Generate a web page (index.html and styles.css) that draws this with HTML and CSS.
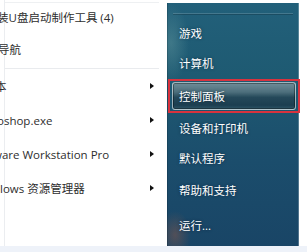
FILE: index.html
```html
<!DOCTYPE html>
<html lang="zh-CN">
<head>
<meta charset="utf-8">
<title>开始菜单</title>
<link rel="stylesheet" href="styles.css">
</head>
<body>
<div class="menu">
  <div class="left">
    <div class="litem first"><span class="label cut3">装U盘启动制作工具 (4)</span></div>
    <div class="litem second"><span class="label cut2">导航</span></div>
    <div class="lsep"></div>
    <div class="litem"><span class="label cut5">本</span><span class="arrow"></span></div>
    <div class="litem"><span class="label cut3">oshop.exe</span><span class="arrow"></span></div>
    <div class="litem"><span class="label cut7">ware Workstation Pro</span><span class="arrow"></span></div>
    <div class="litem"><span class="label">lows 资源管理器</span><span class="arrow"></span></div>
  </div>
  <div class="right">
    <div class="rsep"></div>
    <div class="ritem">游戏</div>
    <div class="ritem">计算机</div>
    <div class="ritem hl g4"><span class="btn">控制面板</span><span class="redbox"></span></div>
    <div class="ritem g3">设备和打印机</div>
    <div class="ritem">默认程序</div>
    <div class="ritem g2">帮助和支持</div>
    <div class="ritem g5">运行...</div>
  </div>
</div>
<div class="bottom"></div>
</body>
</html>
```
FILE: styles.css
```css
html, body {
  margin: 0;
  padding: 0;
  background: #ffffff;
  width: 307px;
  height: 252px;
  overflow: hidden;
  font-family: "Open Sans", "Noto Sans CJK SC", sans-serif;
  font-size: 11.5px;
}

.menu {
  display: flex;
  height: 246px;
}

.left {
  width: 167px;
  flex: none;
  overflow: hidden;
  background:
    linear-gradient(to right, transparent 4px, #ebedf0 4px, #ebedf0 5px, transparent 5px),
    #ffffff;
  position: relative;
}

.left::before {
  content: "";
  display: block;
  height: 1px;
  margin: 2px 8px 0 5px;
  background: #eef0f2;
}

.litem {
  height: 34px;
  display: flex;
  align-items: center;
  justify-content: space-between;
  padding-right: 13px;
  color: #2e2e2e;
}

.litem.first {
  height: 27px;
}

.litem.second {
  height: 38px;
}

.lsep {
  height: 1px;
  margin: 0 8px 0 5px;
  background: #e9ebee;
}

.label {
  white-space: nowrap;
}

.cut2 { margin-left: -2px; }
.cut3 { margin-left: -3px; }
.cut5 { margin-left: -5px; }
.cut7 { margin-left: -7px; }

.arrow {
  width: 0;
  height: 0;
  border-top: 3px solid transparent;
  border-bottom: 3px solid transparent;
  border-left: 4px solid #111;
  flex: none;
}

.right {
  width: 132px;
  flex: none;
  margin-top: 3px;
  height: 243px;
  box-sizing: border-box;
  padding-top: 10px;
  background:
    radial-gradient(ellipse 18px 40px at 4px 40px, rgba(120, 170, 170, 0.35), transparent),
    radial-gradient(ellipse 16px 24px at 8px 232px, rgba(150, 90, 70, 0.45), transparent),
    linear-gradient(to bottom, #22607a 0%, #1e5a72 30%, #1b4d6c 65%, #194566 100%);
  box-shadow: inset -1px 0 0 rgba(255,255,255,0.25), inset 1px 0 0 rgba(0,0,0,0.15);
}

.rsep {
  height: 1px;
  margin: 0 6px 4px 6px;
  background: rgba(255, 255, 255, 0.16);
  box-shadow: 0 1px 0 rgba(0, 0, 0, 0.18);
}

.ritem {
  height: 30px;
  display: flex;
  align-items: center;
  padding-left: 12px;
  color: #ffffff;
  text-shadow: 0 0 3px rgba(0, 20, 40, 0.6);
  position: relative;
}

.g2 { margin-top: 2px; }
.g3 { margin-top: 3px; }
.g4 { margin-top: 4px; }
.g5 { margin-top: 5px; }

.ritem.hl {
  height: 28px;
  padding: 0 3px 0 5px;
  margin-bottom: 2px;
}

.btn {
  flex: 1;
  height: 28px;
  box-sizing: border-box;
  display: flex;
  align-items: center;
  padding-left: 6px;
  border: 1px solid rgba(200, 215, 220, 0.75);
  border-radius: 3px;
  background: linear-gradient(to bottom, #6f8d98 0%, #4d6f7c 35%, #25495a 55%, #1c3e50 85%, #2d5566 100%);
  box-shadow: inset 0 0 0 1px rgba(0, 0, 0, 0.35);
}

.redbox {
  position: absolute;
  left: 1px;
  right: -1px;
  top: -3px;
  bottom: -3px;
  border: 2px solid #d8333e;
}

.bottom {
  height: 6px;
  background: #eef2f9;
}
```
